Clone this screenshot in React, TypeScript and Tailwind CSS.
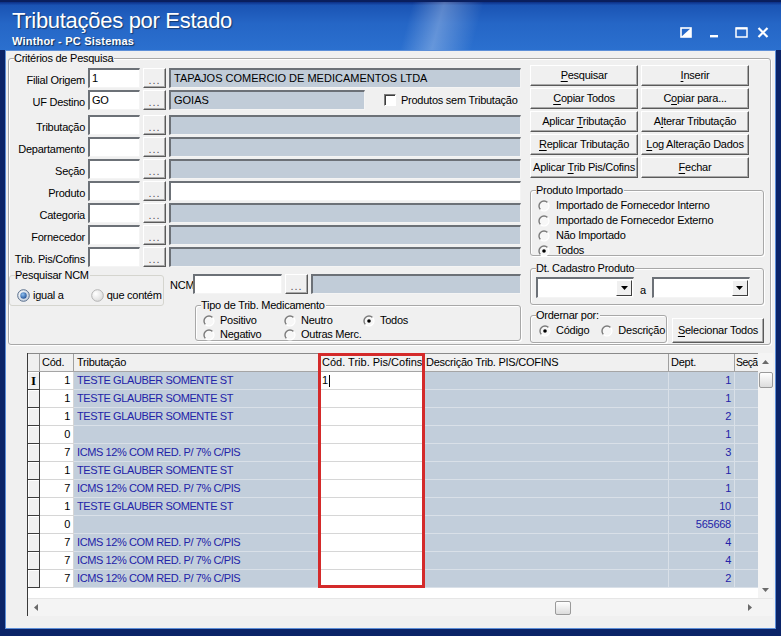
import React from "react";

const FONT = "font-['Liberation_Sans',Arial,sans-serif]";

function U({ children }: { children: React.ReactNode }) {
  return <span className="underline underline-offset-[2px] decoration-1">{children}</span>;
}

function Btn({ children, className = "" }: { children: React.ReactNode; className?: string }) {
  return (
    <div
      className={`flex items-center justify-center bg-[#f0f0f0] border border-t-white border-l-white border-r-[#5a5a5a] border-b-[#5a5a5a] shadow-[inset_-1px_-1px_0_#a9a9a9] text-[11px] leading-none text-black whitespace-nowrap ${className}`}
    >
      {children}
    </div>
  );
}

function Dots({ className = "" }: { className?: string }) {
  return (
    <Btn className={`w-[23px] h-[20px] ${className}`}>
      <span className="text-[#555] text-[11px] tracking-[1px] mt-[4px]">...</span>
    </Btn>
  );
}

function Inp({
  className = "",
  gray = false,
  children,
}: {
  className?: string;
  gray?: boolean;
  children?: React.ReactNode;
}) {
  return (
    <div
      className={`h-[20px] ${gray ? "bg-[#c1ccd8]" : "bg-white"} border-t-2 border-l-2 border-t-[#6c7177] border-l-[#6c7177] border-r border-b border-r-[#f4f4f4] border-b-[#f4f4f4] flex items-end pb-[2px] pl-[2px] text-[11px] leading-[13px] text-black overflow-hidden whitespace-nowrap ${className}`}
    >
      {children}
    </div>
  );
}

function Label({ children, className = "" }: { children: React.ReactNode; className?: string }) {
  return (
    <div className={`text-[11px] leading-[13px] text-black whitespace-nowrap ${className}`}>{children}</div>
  );
}

function CRadio({ checked = false }: { checked?: boolean }) {
  return (
    <svg width="12" height="12" viewBox="0 0 12 12" className="shrink-0">
      <circle cx="6" cy="6" r="5" fill="#f7f7f7" />
      <path d="M9.54 2.46 A5 5 0 0 0 2.46 9.54" stroke="#7b7b7b" strokeWidth="1.4" fill="none" />
      <path d="M9.54 2.46 A5 5 0 0 1 2.46 9.54" stroke="#ffffff" strokeWidth="1.2" fill="none" />
      {checked && <circle cx="6" cy="6" r="1.8" fill="#000" />}
    </svg>
  );
}

function XPRadio({ checked = false }: { checked?: boolean }) {
  return (
    <svg width="13" height="13" viewBox="0 0 13 13" className="shrink-0">
      <defs>
        <radialGradient id={checked ? "rg1" : "rg2"} cx="0.35" cy="0.35" r="0.8">
          <stop offset="0" stopColor="#ffffff" />
          <stop offset="1" stopColor={checked ? "#b9c7d8" : "#d6d6d6"} />
        </radialGradient>
        <radialGradient id="dotg" cx="0.4" cy="0.35" r="0.7">
          <stop offset="0" stopColor="#8ec0f0" />
          <stop offset="1" stopColor="#1f4f96" />
        </radialGradient>
      </defs>
      <circle
        cx="6.5"
        cy="6.5"
        r="5.8"
        fill={`url(#${checked ? "rg1" : "rg2"})`}
        stroke={checked ? "#5a6f8c" : "#b4b4b4"}
        strokeWidth="1"
      />
      {checked && <circle cx="6.5" cy="6.5" r="3.2" fill="url(#dotg)" />}
    </svg>
  );
}

function Group({
  label,
  className = "",
  children,
  light = false,
}: {
  label: string;
  className?: string;
  children?: React.ReactNode;
  light?: boolean;
}) {
  return (
    <div
      className={`relative border rounded-[3px] ${
        light ? "border-[#d5d5cf]" : "border-[#a8a8a8] shadow-[1px_1px_0_#ffffff,inset_1px_1px_0_#ffffff]"
      } ${className}`}
    >
      <span className="absolute left-[5px] -top-[7px] bg-[#f0f0f0] pr-[1px] text-[11px] leading-[13px] text-black whitespace-nowrap">
        {label}
      </span>
      {children}
    </div>
  );
}

function Combo({ className = "" }: { className?: string }) {
  return (
    <div
      className={`h-[21px] bg-white border-t-2 border-l-2 border-t-[#6c7177] border-l-[#6c7177] border-r border-b border-r-[#f4f4f4] border-b-[#f4f4f4] flex justify-end items-center pr-[1px] ${className}`}
    >
      <div className="w-[16px] h-[16px] bg-[#f0f0f0] border border-t-white border-l-white border-r-[#404040] border-b-[#404040] flex items-center justify-center">
        <svg width="7" height="4" viewBox="0 0 7 4">
          <path d="M0 0h7L3.5 4z" fill="#000" />
        </svg>
      </div>
    </div>
  );
}

function FormRow({
  label,
  value = "",
  gray = true,
  className = "",
}: {
  label: string;
  value?: string;
  gray?: boolean;
  className?: string;
}) {
  return (
    <div className={`flex items-end gap-[3px] h-[20px] ${className}`}>
      <Label className="w-[76px] text-right pb-[1px]">{label}</Label>
      <Inp className="w-[52px]">{value}</Inp>
      <Dots />
      <Inp gray={gray} className="w-[352px]" />
    </div>
  );
}

const TESTE = "TESTE GLAUBER SOMENTE ST";
const ICMS = "ICMS 12% COM RED. P/ 7% C/PIS";

const rows: { c: string; t: string; p?: string; d: string }[] = [
  { c: "1", t: TESTE, p: "1", d: "1" },
  { c: "1", t: TESTE, d: "1" },
  { c: "1", t: TESTE, d: "2" },
  { c: "0", t: "", d: "1" },
  { c: "7", t: ICMS, d: "3" },
  { c: "1", t: TESTE, d: "1" },
  { c: "7", t: ICMS, d: "1" },
  { c: "1", t: TESTE, d: "10" },
  { c: "0", t: "", d: "565668" },
  { c: "7", t: ICMS, d: "4" },
  { c: "7", t: ICMS, d: "4" },
  { c: "7", t: ICMS, d: "2" },
];

function TitleIcons() {
  return (
    <div className="flex items-center mt-[13px] mr-[12px]">
      <svg width="12" height="11" viewBox="0 0 12 11" className="mr-[18px]">
        <rect x="1" y="1" width="10" height="9" fill="none" stroke="#fff" strokeWidth="1.6" />
        <path d="M1 10 L11 1 L11 10 Z" fill="#fff" />
      </svg>
      <svg width="8" height="11" viewBox="0 0 8 11" className="mr-[17px]">
        <rect x="0" y="8" width="8" height="2.4" fill="#fff" />
      </svg>
      <svg width="13" height="11" viewBox="0 0 13 11" className="mr-[9px]">
        <rect x="1" y="1" width="11" height="9" fill="none" stroke="#fff" strokeWidth="1.5" />
        <rect x="1" y="0.5" width="11" height="2" fill="#fff" />
      </svg>
      <svg width="12" height="11" viewBox="0 0 12 11">
        <path d="M1.5 1 L10.5 10 M10.5 1 L1.5 10" stroke="#fff" strokeWidth="2.2" />
      </svg>
    </div>
  );
}

export default function App() {
  const blue = "text-[#2323a8]";
  return (
    <div className={`w-[781px] h-[636px] bg-[#0b2468] flex flex-col overflow-hidden tracking-[-0.25px] ${FONT}`}>
      {/* Title bar */}
      <div className="h-[50px] shrink-0 flex justify-between bg-[linear-gradient(105deg,transparent_0%,transparent_52%,rgba(255,255,255,0.28)_56%,transparent_61%),linear-gradient(180deg,#0c2f86_0%,#1b54b4_7%,#2566c6_45%,#2b70cf_100%)] border-t-[2px] border-[#0a1f5e]">
        <div className="pl-[12px] pt-[6px]">
          <div className="text-[22px] leading-[26px] tracking-[-0.3px] text-white [text-shadow:1px_1px_1px_rgba(0,0,0,0.45)]">
            Tributações por Estado
          </div>
          <div className="text-[11px] leading-[13px] font-bold tracking-[0.2px] text-white mt-[1px] [text-shadow:1px_1px_1px_rgba(0,0,0,0.6)]">
            Winthor - PC Sistemas
          </div>
        </div>
        <TitleIcons />
      </div>

      {/* Frame + body */}
      <div className="flex-1 flex flex-col px-[5px] pb-[7px]">
        <div className="flex-1 border border-[#5d8fd8] flex flex-col">
          <div className="flex-1 bg-[#f0f0f0] flex flex-col">
            {/* Critérios de Pesquisa */}
            <Group label="Critérios de Pesquisa" className="ml-[2px] mt-[7px] w-[763px] h-[287px] shrink-0">
              <div className="flex items-start">
                {/* Left column */}
                <div className="w-[513px] flex flex-col">
                  <div className="flex items-end gap-[3px] h-[20px] mt-[9px]">
                    <Label className="w-[76px] text-right pb-[1px]">Filial Origem</Label>
                    <Inp className="w-[52px]">1</Inp>
                    <Dots />
                    <Inp gray className="w-[352px] pl-[3px] tracking-[0px]">
                      TAPAJOS COMERCIO DE MEDICAMENTOS LTDA
                    </Inp>
                  </div>
                  <div className="flex items-end gap-[3px] h-[20px] mt-[2px]">
                    <Label className="w-[76px] text-right pb-[1px]">UF Destino</Label>
                    <Inp className="w-[52px]">GO</Inp>
                    <Dots />
                    <Inp gray className="w-[196px] pl-[3px] tracking-[0px]">
                      GOIAS
                    </Inp>
                    <div className="ml-[16px] flex items-center gap-[5px] self-center">
                      <div className="w-[12px] h-[12px] bg-white border-t border-l border-t-[#7b7b7b] border-l-[#7b7b7b] border-r border-b border-r-white border-b-white shadow-[inset_1px_1px_0_#3c3c3c]" />
                      <Label>Produtos sem Tributação</Label>
                    </div>
                  </div>
                  <div className="flex flex-col gap-[2px] mt-[5px]">
                    <FormRow label="Tributação" />
                    <FormRow label="Departamento" />
                    <FormRow label="Seção" />
                    <FormRow label="Produto" gray={false} />
                    <FormRow label="Categoria" />
                    <FormRow label="Fornecedor" />
                    <FormRow label="Trib. Pis/Cofins" />
                  </div>
                  {/* NCM section */}
                  <div className="flex items-start mt-[8px]">
                    <Group label="Pesquisar NCM" light className="w-[155px] h-[31px] shrink-0">
                      <div className="flex items-center mt-[13px] ml-[7px]">
                        <XPRadio checked />
                        <Label className="ml-[3px]">igual a</Label>
                        <div className="ml-[27px]">
                          <XPRadio />
                        </div>
                        <Label className="ml-[3px]">que contém</Label>
                      </div>
                    </Group>
                    <div className="flex flex-col ml-[6px]">
                      <div className="flex items-end h-[19px]">
                        <Label className="w-[23px] pb-[2px]">NCM</Label>
                        <Inp className="w-[89px] h-[19px]" />
                        <Dots className="ml-[3px] h-[19px]" />
                        <Inp gray className="w-[210px] h-[19px] ml-[3px]" />
                      </div>
                      <Group label="Tipo de Trib. Medicamento" className="ml-[25px] mt-[11px] w-[326px] h-[36px]">
                        <div className="grid grid-cols-[81px_79px_100px] ml-[7px] mt-[8px] gap-y-[1px]">
                          <div className="flex items-center gap-[5px]">
                            <CRadio />
                            <Label>Positivo</Label>
                          </div>
                          <div className="flex items-center gap-[5px]">
                            <CRadio />
                            <Label>Neutro</Label>
                          </div>
                          <div className="flex items-center gap-[5px]">
                            <CRadio checked />
                            <Label>Todos</Label>
                          </div>
                          <div className="flex items-center gap-[5px]">
                            <CRadio />
                            <Label>Negativo</Label>
                          </div>
                          <div className="flex items-center gap-[5px]">
                            <CRadio />
                            <Label>Outras Merc.</Label>
                          </div>
                        </div>
                      </Group>
                    </div>
                  </div>
                </div>

                {/* Right column */}
                <div className="ml-[8px] w-[235px] flex flex-col">
                  <div className="grid grid-cols-[108px_108px] gap-x-[3px] gap-y-[2px] mt-[6px]">
                    <Btn className="h-[21px]">
                      <span>
                        <U>P</U>esquisar
                      </span>
                    </Btn>
                    <Btn className="h-[21px]">
                      <span>
                        <U>I</U>nserir
                      </span>
                    </Btn>
                    <Btn className="h-[21px]">
                      <span>
                        <U>C</U>opiar Todos
                      </span>
                    </Btn>
                    <Btn className="h-[21px]">
                      <span>
                        C<U>o</U>piar para...
                      </span>
                    </Btn>
                    <Btn className="h-[21px]">
                      <span>
                        Aplicar <U>T</U>ributação
                      </span>
                    </Btn>
                    <Btn className="h-[21px]">
                      <span>
                        A<U>l</U>terar Tributação
                      </span>
                    </Btn>
                    <Btn className="h-[21px]">
                      <span>
                        <U>R</U>eplicar Tributação
                      </span>
                    </Btn>
                    <Btn className="h-[21px]">
                      <span>
                        <U>L</U>og Alteração Dados
                      </span>
                    </Btn>
                    <Btn className="h-[21px]">
                      <span>
                        Aplicar <U>T</U>rib Pis/Cofins
                      </span>
                    </Btn>
                    <Btn className="h-[21px]">
                      <span>
                        <U>F</U>echar
                      </span>
                    </Btn>
                  </div>

                  <Group label="Produto Importado" className="mt-[12px] w-[234px] h-[66px]">
                    <div className="flex flex-col ml-[7px] mt-[8px] gap-[2px]">
                      <div className="flex items-center gap-[6px]">
                        <CRadio />
                        <Label>Importado de Fornecedor Interno</Label>
                      </div>
                      <div className="flex items-center gap-[6px]">
                        <CRadio />
                        <Label>Importado de Fornecedor Externo</Label>
                      </div>
                      <div className="flex items-center gap-[6px]">
                        <CRadio />
                        <Label>Não Importado</Label>
                      </div>
                      <div className="flex items-center gap-[6px]">
                        <CRadio checked />
                        <Label>Todos</Label>
                      </div>
                    </div>
                  </Group>

                  <Group label="Dt. Cadastro Produto" className="mt-[12px] w-[234px] h-[37px]">
                    <div className="flex items-end ml-[5px] mt-[8px]">
                      <Combo className="w-[98px]" />
                      <Label className="ml-[6px] mr-[6px] pb-[1px]">a</Label>
                      <Combo className="w-[98px]" />
                    </div>
                  </Group>

                  <div className="flex items-start mt-[10px]">
                    <Group label="Ordernar por:" className="w-[137px] h-[28px] shrink-0">
                      <div className="flex items-center ml-[8px] mt-[8px]">
                        <CRadio checked />
                        <Label className="ml-[5px]">Código</Label>
                        <div className="ml-[12px]">
                          <CRadio />
                        </div>
                        <Label className="ml-[5px]">Descrição</Label>
                      </div>
                    </Group>
                    <Btn className="ml-[5px] mt-[3px] w-[92px] h-[25px]">
                      <span>
                        <U>S</U>elecionar Todos
                      </span>
                    </Btn>
                  </div>
                </div>
              </div>
            </Group>

            {/* Grid */}
            <div className="relative ml-[21px] mt-[8px] w-[746px] h-[263px] border-l border-[#3a3a3a] bg-white flex flex-col shrink-0">
              <div className="flex h-[245px]">
                <div className="w-[730px] flex flex-col overflow-hidden">
                  {/* header */}
                  <div className="flex h-[19px] bg-[#f0f0f0] border-t border-b border-t-[#8a8a8a] border-b-[#a5a5a5] text-[11px] leading-none text-black">
                    <div className="w-[12px] shrink-0 border-r border-[#a0a0a0]" />
                    <div className="w-[34px] shrink-0 border-r border-[#a0a0a0] flex items-center pl-[2px]">Cód.</div>
                    <div className="w-[245px] shrink-0 border-r border-[#a0a0a0] flex items-center pl-[3px]">Tributação</div>
                    <div className="w-[105px] shrink-0 border-r border-[#a0a0a0] flex items-center pl-[3px] whitespace-nowrap tracking-[0px]">
                      Cód. Trib. Pis/Cofins
                    </div>
                    <div className="w-[245px] shrink-0 border-r border-[#a0a0a0] flex items-center pl-[2px] whitespace-nowrap">
                      Descrição Trib. PIS/COFINS
                    </div>
                    <div className="w-[66px] shrink-0 border-r border-[#a0a0a0] flex items-center pl-[2px]">Dept.</div>
                    <div className="w-[23px] shrink-0 flex items-center pl-[1px] whitespace-nowrap tracking-[-0.6px] text-[10.5px]">Seçã</div>
                  </div>
                  {rows.map((r, i) => (
                    <div key={i} className="flex h-[18px] shrink-0 text-[11px] leading-none">
                      <div className="w-[12px] shrink-0 bg-[#f0f0f0] border-r border-b border-[#3c3c3c] shadow-[inset_1px_1px_0_#ffffff] flex items-center justify-center">
                        {i === 0 && (
                          <span className="font-['Liberation_Serif',serif] text-[13px] leading-none text-black font-bold">I</span>
                        )}
                      </div>
                      <div className="w-[34px] shrink-0 bg-white border-r border-b border-[#d6d6d6] flex items-center justify-end pr-[3px] text-black">
                        {r.c}
                      </div>
                      <div className={`w-[245px] shrink-0 bg-[#c2cedb] border-r border-b border-[#d9e0e8] flex items-center pl-[3px] whitespace-nowrap tracking-[-0.4px] ${blue}`}>
                        {r.t}
                      </div>
                      <div className="w-[105px] shrink-0 bg-white border-r border-b border-[#d6d6d6] flex items-center pl-[3px] text-black">
                        {r.p && (
                          <>
                            <span>{r.p}</span>
                            <span className="inline-block w-[1px] h-[12px] bg-black ml-[1px]" />
                          </>
                        )}
                      </div>
                      <div className="w-[245px] shrink-0 bg-[#c2cedb] border-r border-b border-[#d9e0e8]" />
                      <div className={`w-[66px] shrink-0 bg-[#c2cedb] border-r border-b border-[#d9e0e8] flex items-center justify-end pr-[3px] ${blue}`}>
                        {r.d}
                      </div>
                      <div className="w-[23px] shrink-0 bg-[#c2cedb] border-b border-[#d9e0e8]" />
                    </div>
                  ))}
                </div>
                {/* vertical scrollbar */}
                <div className="w-[15px] bg-[#f4f4f4] flex flex-col items-center">
                  <div className="h-[17px] flex items-center justify-center">
                    <svg width="7" height="4" viewBox="0 0 7 4">
                      <path d="M0 4h7L3.5 0z" fill="#6a6a6a" />
                    </svg>
                  </div>
                  <div className="mt-[2px] w-[14px] h-[16px] rounded-[2px] border border-[#9a9a9a] bg-[linear-gradient(180deg,#ffffff,#dcdcdc)]" />
                  <div className="flex-1" />
                  <div className="h-[17px] flex items-center justify-center">
                    <svg width="7" height="4" viewBox="0 0 7 4">
                      <path d="M0 0h7L3.5 4z" fill="#6a6a6a" />
                    </svg>
                  </div>
                </div>
              </div>
              {/* horizontal scrollbar */}
              <div className="flex h-[18px] bg-[#f4f4f4] border-t border-[#e6e6e6]">
                <div className="w-[730px] flex items-center">
                  <div className="w-[16px] flex items-center justify-center">
                    <svg width="4" height="7" viewBox="0 0 4 7">
                      <path d="M4 0v7L0 3.5z" fill="#6a6a6a" />
                    </svg>
                  </div>
                  <div className="flex-1 flex items-center">
                    <div className="ml-[511px] w-[16px] h-[14px] rounded-[2px] border border-[#9a9a9a] bg-[linear-gradient(180deg,#ffffff,#dcdcdc)]" />
                  </div>
                  <div className="w-[16px] flex items-center justify-center">
                    <svg width="4" height="7" viewBox="0 0 4 7">
                      <path d="M0 0v7L4 3.5z" fill="#6a6a6a" />
                    </svg>
                  </div>
                </div>
                <div className="w-[15px]" />
              </div>

              {/* red highlight */}
              <div className="absolute left-[290px] top-0 w-[107px] h-[235px] border-[3px] border-[#d42a2a] pointer-events-none" />
            </div>
          </div>
        </div>
      </div>
    </div>
  );
}
